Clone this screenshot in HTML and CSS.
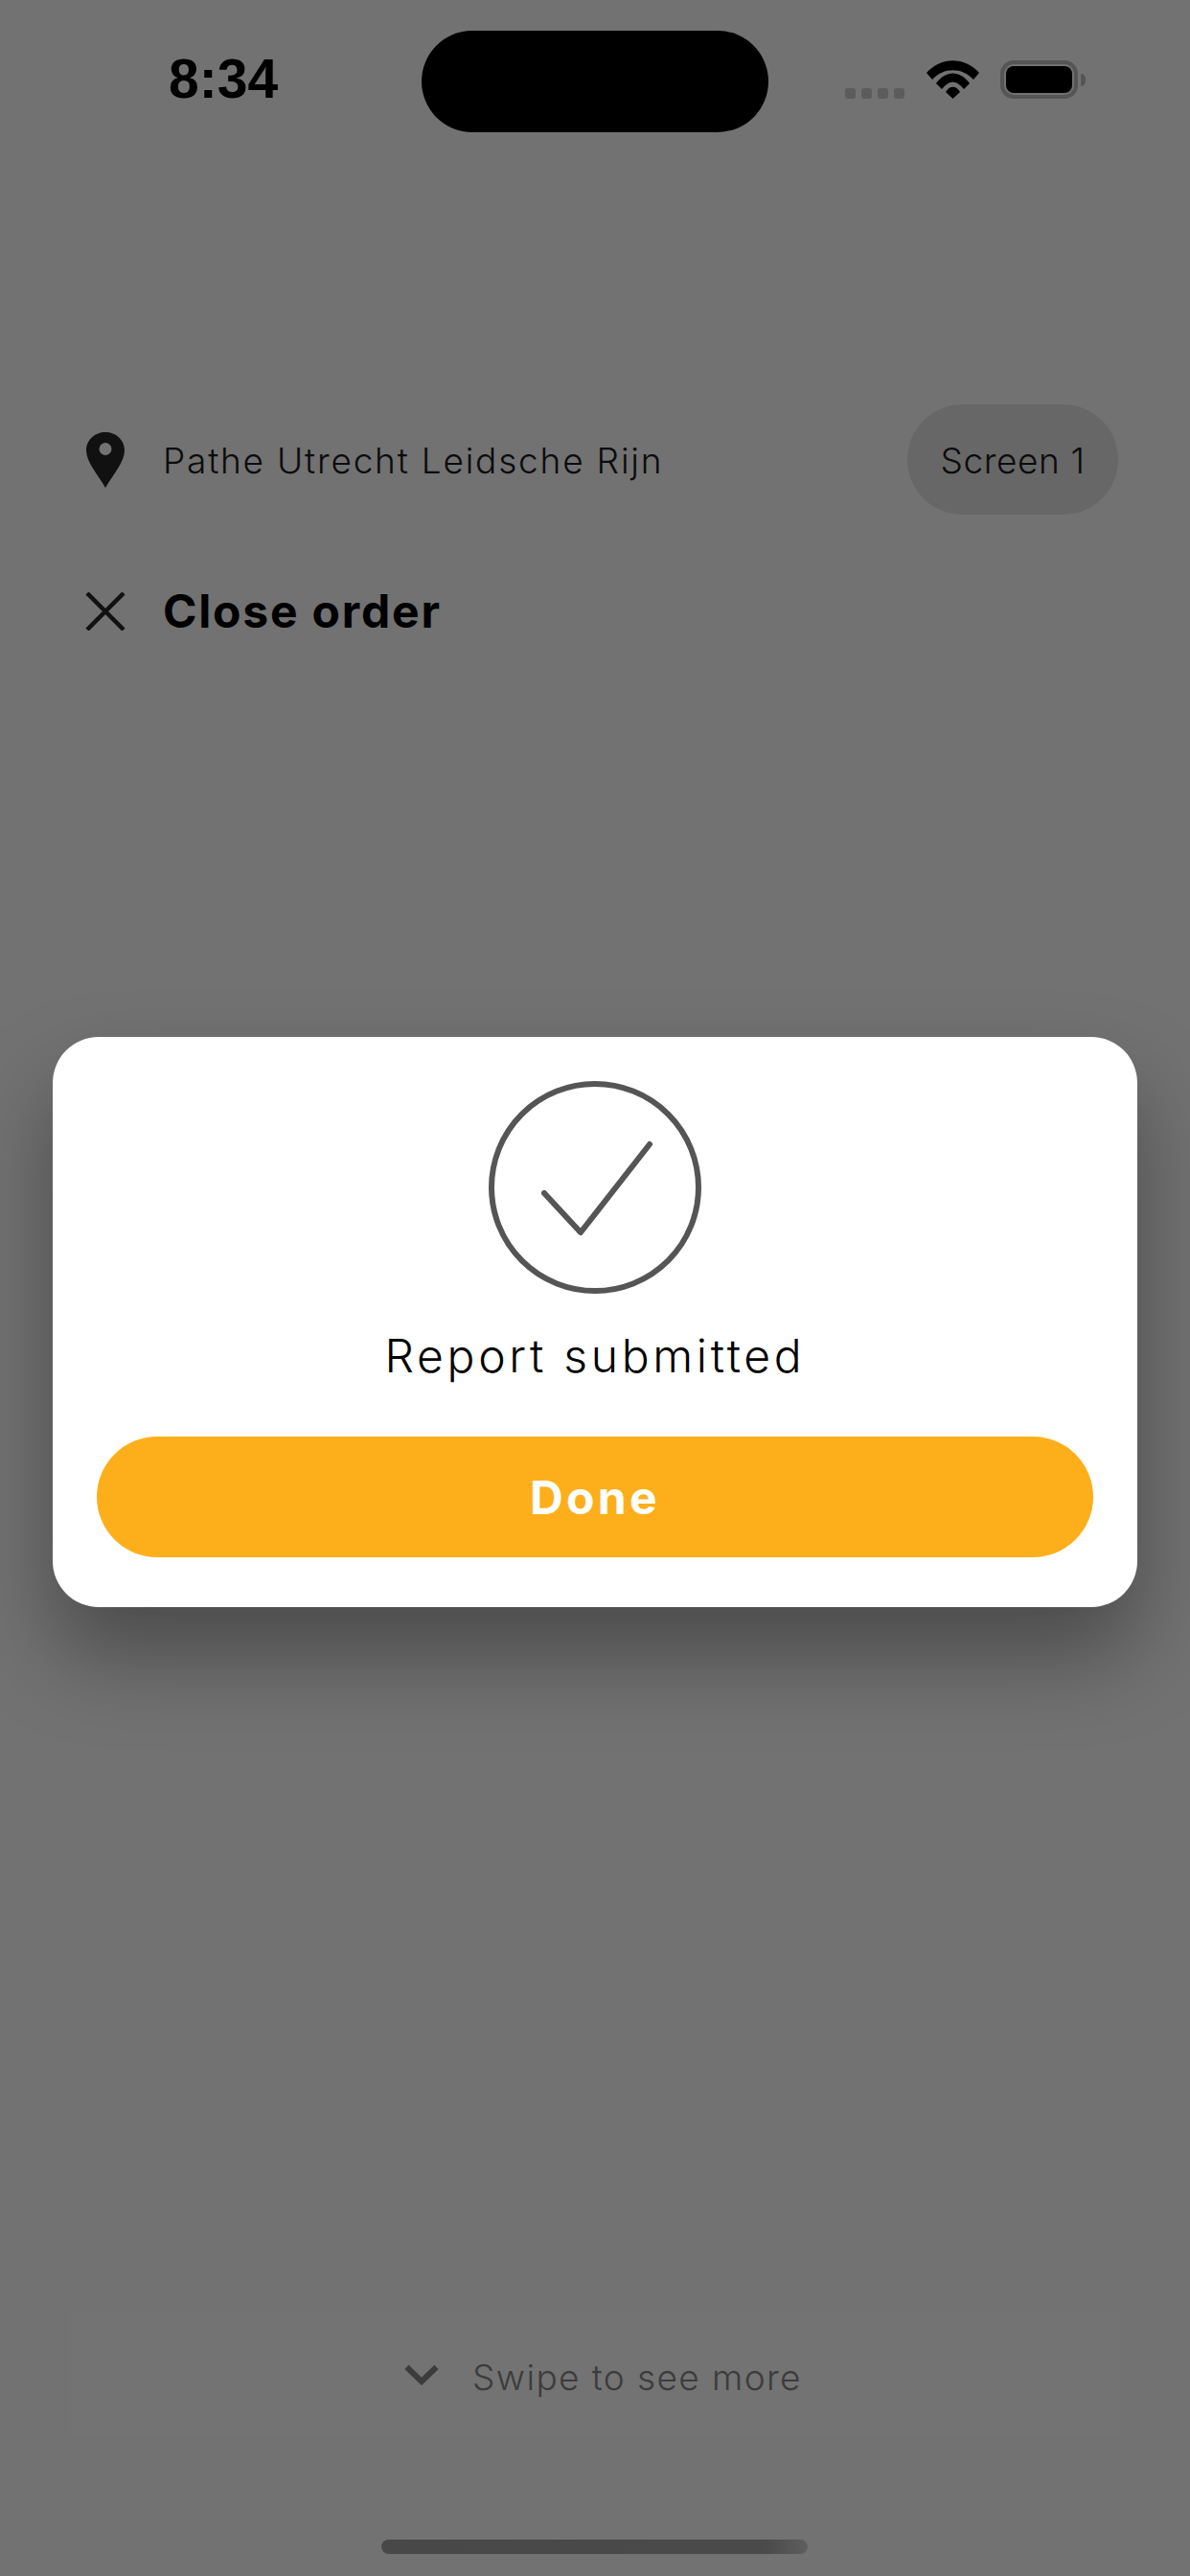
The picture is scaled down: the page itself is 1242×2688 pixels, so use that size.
FILE: index.html
```html
<!DOCTYPE html>
<html lang="en">
<head>
    <meta charset="UTF-8">
    <meta name="viewport" content="width=device-width, initial-scale=1.0">
    <title>Report submitted</title>
    <link rel="stylesheet" href="styles.css">
</head>
<body>
    <div class="status-bar">
        <span class="time">8:34</span>
        <div class="island"></div>
        <div class="signal">
            <span></span><span></span><span></span><span></span>
        </div>
        <svg class="wifi" width="55" height="40" viewBox="0 0 55 40">
            <path d="M0 13C15-4 40-4 55 13L49 20C37 7 18 7 6 20Z"/>
            <path d="M10 24C20 10 35 10 45 24L39 30C31 20 24 20 16 30Z"/>
            <path d="M20 33C24 26 31 26 35 33L27.5 40Z"/>
        </svg>
        <div class="battery"><div class="battery-fill"></div></div>
        <div class="battery-cap"></div>
    </div>

    <div class="venue-row">
        <svg class="pin" width="40" height="58" viewBox="0 0 40 58">
            <path fill-rule="evenodd" d="M20 0C9 0 0 8 0 19C0 31 12 44 20 58C28 44 40 31 40 19C40 8 31 0 20 0ZM20 11A6.500 6.500 0 1 1 20 24A6.500 6.500 0 1 1 20 11Z"/>
        </svg>
        <span class="venue-name">Pathe Utrecht Leidsche Rijn</span>
        <div class="screen-pill">Screen 1</div>
    </div>

    <div class="close-row">
        <svg class="close-icon" width="42" height="40" viewBox="0 0 42 40">
            <path d="M2 1L40 39M40 1L2 39"/>
        </svg>
        <span class="close-label">Close order</span>
    </div>

    <div class="swipe-box">
        <svg class="chevron" width="36" height="22" viewBox="0 0 36 22">
            <path d="M2.500 3L18 18L33.500 3"/>
        </svg>
        <span class="swipe-label">Swipe to see more</span>
    </div>
    <div class="home-bar"></div>

    <div class="modal">
        <svg class="check" width="222" height="222" viewBox="0 0 222 222">
            <circle cx="111" cy="111" r="108"/>
            <path d="M58 117L96 158L168 66"/>
        </svg>
        <p class="modal-text">Report submitted</p>
        <button class="done-btn" type="button">Done</button>
    </div>
</body>
</html>
```

FILE: styles.css
```css
* {
    box-sizing: border-box;
}
html, body {
    margin: 0;
    padding: 0;
}
body {
    width: 1242px;
    height: 2688px;
    background-color: #727272;
    font-family: Inter, "Liberation Sans", sans-serif;
    color: #000;
    display: flex;
    flex-direction: column;
    position: relative;
    overflow: hidden;
}
.status-bar {
    display: flex;
    align-items: flex-end;
    height: 106px;
    margin-top: 32px;
    padding-bottom: 35px;
    padding-left: 176px;
}
.time {
    width: 264px;
    font-family: "Liberation Sans", Arial, sans-serif;
    font-weight: 700;
    font-size: 57px;
    line-height: 41px;
}
.island {
    width: 362px;
    height: 106px;
    margin-bottom: -35px;
    background: #000;
    border-radius: 53px;
}
.signal {
    display: flex;
    gap: 6px;
    margin-left: 80px;
}
.signal span {
    width: 11px;
    height: 11px;
    border-radius: 3px;
    background: #5c5c5c;
}
.wifi {
    margin-left: 23px;
}
.battery {
    width: 81px;
    height: 40px;
    margin-left: 22px;
    padding: 2px;
    border: 4px solid #555;
    border-radius: 14px;
}
.battery-fill {
    height: 100%;
    background: #000;
    border-radius: 8px;
}
.battery-cap {
    width: 5px;
    height: 13px;
    margin-left: 3px;
    margin-bottom: 13px;
    background: #555;
    border-radius: 0 7px 7px 0;
}
.venue-row {
    display: flex;
    align-items: center;
    margin-top: 284px;
    padding: 0 75px 0 90px;
}
.pin {
    fill: #111;
}
.venue-name {
    flex: 1;
    margin-left: 40px;
    padding-top: 2px;
    font-size: 37px;
    font-weight: 300;
    letter-spacing: 1.8px;
    color: #0c0c0c;
}
.screen-pill {
    width: 220px;
    height: 115px;
    padding-top: 2px;
    background: #676767;
    border-radius: 58px;
    display: flex;
    align-items: center;
    justify-content: center;
    font-size: 37px;
    font-weight: 300;
    letter-spacing: 0.6px;
    color: #0c0c0c;
}
.close-row {
    display: flex;
    align-items: center;
    margin-top: 71px;
    padding-left: 89px;
}
.close-icon {
    fill: none;
    stroke: #111;
    stroke-width: 4.500;
}
.close-label {
    margin-left: 39px;
    font-size: 48px;
    font-weight: 700;
    letter-spacing: 1.8px;
}
.swipe-box {
    display: flex;
    align-items: center;
    justify-content: center;
    height: 130px;
    margin: auto 73px 0 72px;
    background: #737373;
    padding-left: 18px;
}
.chevron {
    fill: none;
    stroke: #3c3c3c;
    stroke-width: 6;
}
.swipe-label {
    margin-left: 35px;
    margin-top: 4px;
    font-size: 37px;
    font-weight: 300;
    letter-spacing: 1.4px;
    color: #3c3c3c;
}
.home-bar {
    width: 445px;
    height: 15px;
    margin: 107px 0 23px 398px;
    border-radius: 8px;
    background: linear-gradient(to right, #484848, #4a4a4a 90%, #5e5e5e);
}
.modal {
    position: absolute;
    left: 55px;
    top: 1082px;
    width: 1132px;
    height: 595px;
    padding: 46px 46px 0;
    background: #fff;
    border-radius: 48px;
    box-shadow: 0 50px 90px rgba(0, 0, 0, 0.34);
    display: flex;
    flex-direction: column;
    align-items: center;
}
.check {
    fill: none;
    stroke: #555;
    stroke-width: 6;
    stroke-linecap: round;
    stroke-linejoin: round;
}
.modal-text {
    margin: 27px 0 0;
    font-size: 48px;
    font-weight: 300;
    letter-spacing: 3.7px;
    line-height: 76px;
}
.done-btn {
    width: 1040px;
    height: 126px;
    margin-top: 46px;
    border: none;
    border-radius: 63px;
    background-color: #fdaf1b;
    color: white;
    font-family: Inter, "Liberation Sans", sans-serif;
    font-size: 48px;
    font-weight: 700;
    letter-spacing: 3.4px;
}
```
